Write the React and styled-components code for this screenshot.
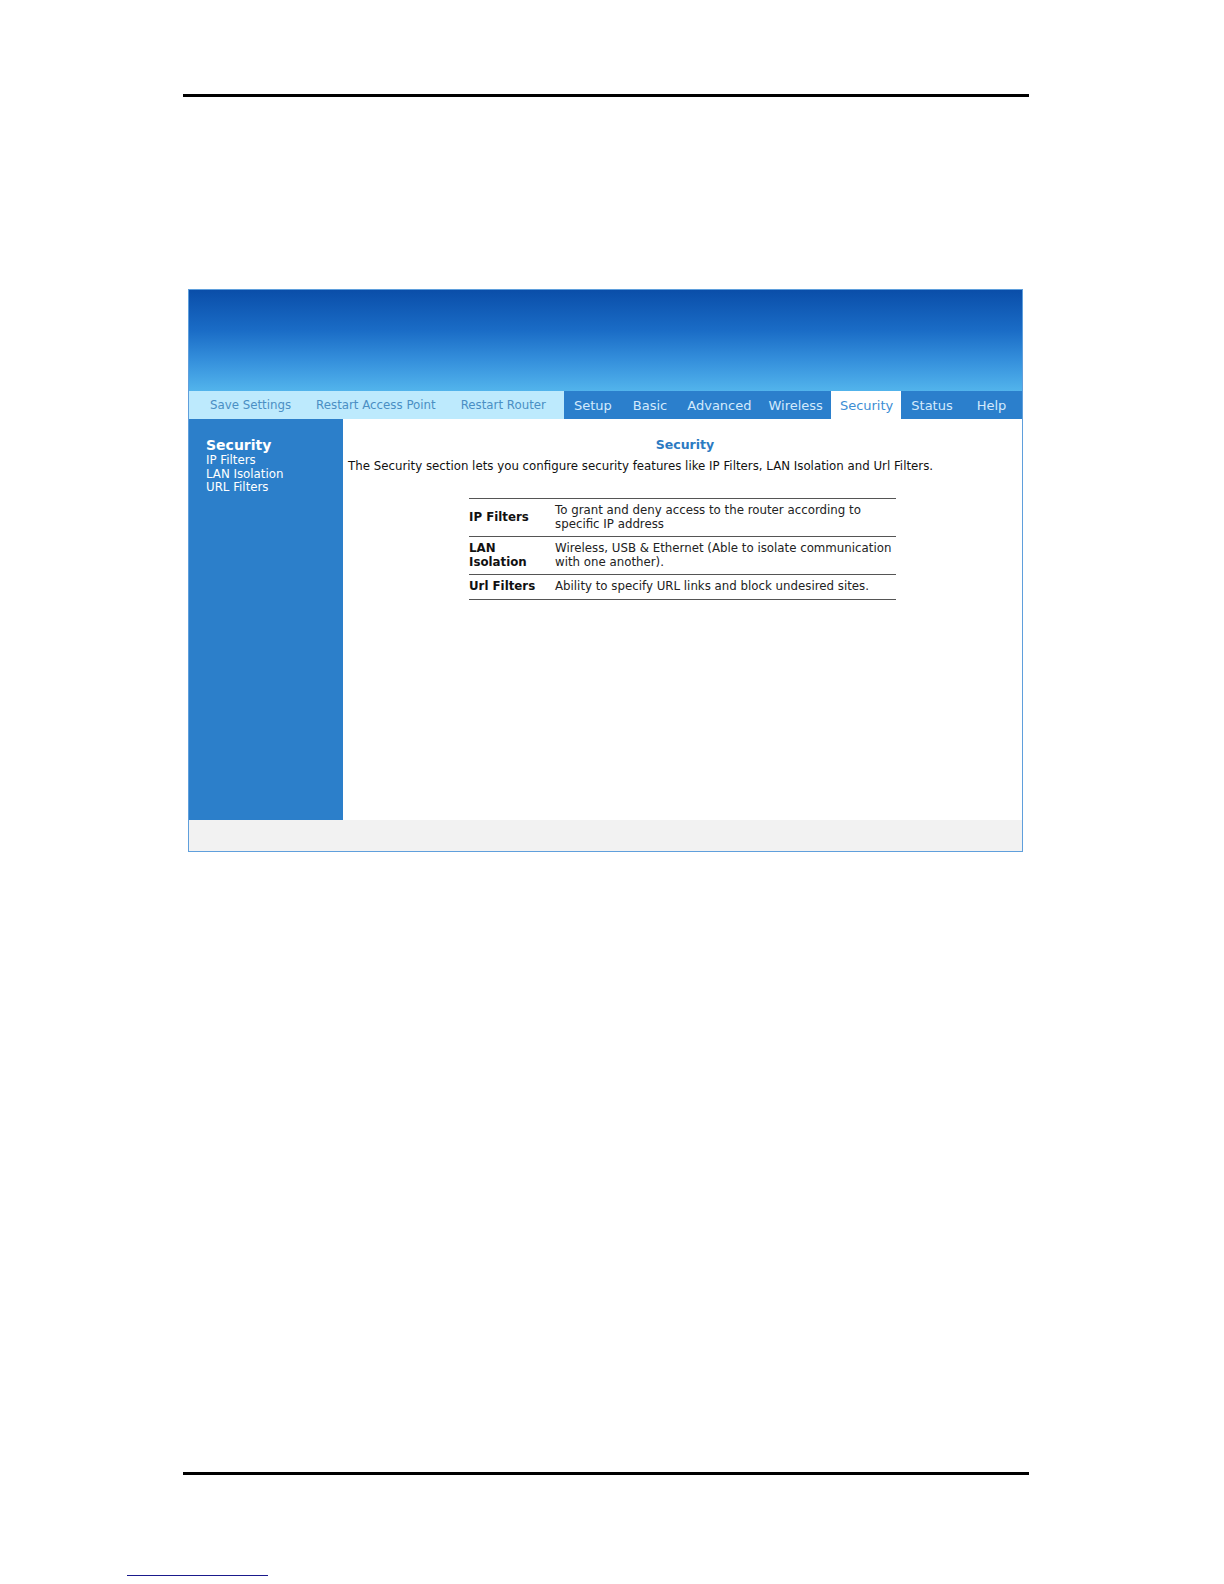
import React from 'react';
import styled, { createGlobalStyle } from 'styled-components';

const GlobalStyle = createGlobalStyle`
  html, body {
    margin: 0;
    height: 1584px;
    overflow: hidden;
  }
  body {
    background: #fff;
    font-family: 'DejaVu Sans', Verdana, sans-serif;
  }
`;

const Page = styled.div`
  height: 1584px;
  padding-top: 94px;
  box-sizing: border-box;
  overflow: hidden;
`;

const Rule = styled.div`
  margin-left: 183px;
  width: 846px;
  height: 3px;
  background: #000;
  margin-top: ${p => p.$top || 0}px;
`;

const Frame = styled.div`
  margin-top: 192px;
  margin-left: 188px;
  width: 835px;
  border: 1px solid #5f9fdc;
  box-sizing: border-box;
`;

const Banner = styled.div`
  height: 101px;
  background: linear-gradient(to bottom, #0a4ea9 0%, #1a6cc6 40%, #3590dc 70%, #52b4ec 100%);
`;

const NavBar = styled.nav`
  display: flex;
  height: 28px;
  background: #2b7fcc;
`;

const ToolGroup = styled.div`
  display: flex;
  align-items: center;
  width: 375px;
  flex: none;
  padding-left: 21px;
  gap: 25px;
  background: #bdeafd;
  box-sizing: border-box;
`;

const ToolLink = styled.span`
  font-size: 11.8px;
  color: #4a8fc4;
  white-space: nowrap;
`;

const TabGroup = styled.div`
  display: flex;
  align-items: stretch;
  flex: 1;
`;

const Tab = styled.span`
  display: flex;
  align-items: center;
  padding: 0 ${p => p.$right ?? p.$pad}px 0 ${p => p.$pad}px;
  font-size: 13px;
  white-space: nowrap;
  color: ${p => (p.$active ? '#3d8ed4' : '#d3eafc')};
  background: ${p => (p.$active ? '#fff' : 'transparent')};
`;

const Body = styled.div`
  display: flex;
  height: 401px;
`;

const Sidebar = styled.aside`
  width: 154px;
  flex: none;
  background: #2c7fca;
  padding: 18px 0 0 17px;
  box-sizing: border-box;
`;

const SideTitle = styled.div`
  color: #fff;
  font-size: 14px;
  font-weight: bold;
  line-height: 17px;
`;

const SideLink = styled.div`
  color: #fff;
  font-size: 11.8px;
  line-height: 13.5px;
`;

const Content = styled.main`
  flex: 1;
  padding: 18px 0 0 5px;
  background: #fff;
`;

const Heading = styled.div`
  text-align: center;
  color: #2b7ac2;
  font-size: 12.5px;
  font-weight: bold;
  line-height: 16px;
`;

const Intro = styled.p`
  margin: 6px 0 0;
  font-size: 11.8px;
  line-height: 14px;
  color: #111;
  white-space: nowrap;
`;

const Table = styled.table`
  margin: 25px 0 0 121px;
  width: 427px;
  table-layout: fixed;
  border-collapse: collapse;
  border-top: 1px solid #555;
`;

const Row = styled.tr`
  border-bottom: 1px solid #555;
`;

const Label = styled.th`
  width: 86px;
  text-align: left;
  vertical-align: middle;
  font-size: 11.8px;
  line-height: 13.5px;
  color: #111;
  padding: 5px 0;
`;

const Desc = styled.td`
  font-size: 11.8px;
  line-height: 13.5px;
  color: #222;
  padding: 5px 0;
  vertical-align: middle;
`;

const Footer = styled.div`
  height: 31px;
  background: #f2f2f2;
`;

const FootLink = styled.div`
  margin: 100px 0 0 127px;
  width: 141px;
  height: 1px;
  background: #1a1a8c;
`;

const tools = ['Save Settings', 'Restart Access Point', 'Restart Router'];
const tabs = [
  { label: 'Setup', pad: 10 },
  { label: 'Basic', pad: 11 },
  { label: 'Advanced', pad: 9 },
  { label: 'Wireless', pad: 8 },
  { label: 'Security', pad: 9, right: 8, active: true },
  { label: 'Status', pad: 10, right: 10 },
  { label: 'Help', pad: 14 },
];

const rows = [
  { name: 'IP Filters', text: 'To grant and deny access to the router according to specific IP address' },
  { name: 'LAN Isolation', text: 'Wireless, USB & Ethernet (Able to isolate communication with one another).' },
  { name: 'Url Filters', text: 'Ability to specify URL links and block undesired sites.' },
];

export default function App() {
  return (
    <Page>
      <GlobalStyle />
      <Rule />
      <Frame>
        <Banner />
        <NavBar>
          <ToolGroup>
            {tools.map(t => <ToolLink key={t}>{t}</ToolLink>)}
          </ToolGroup>
          <TabGroup>
            {tabs.map(t => (
              <Tab key={t.label} $pad={t.pad} $right={t.right} $active={t.active}>{t.label}</Tab>
            ))}
          </TabGroup>
        </NavBar>
        <Body>
          <Sidebar>
            <SideTitle>Security</SideTitle>
            <SideLink>IP Filters</SideLink>
            <SideLink>LAN Isolation</SideLink>
            <SideLink>URL Filters</SideLink>
          </Sidebar>
          <Content>
            <Heading>Security</Heading>
            <Intro>The Security section lets you configure security features like IP Filters, LAN Isolation and Url Filters.</Intro>
            <Table>
              <tbody>
                {rows.map(r => (
                  <Row key={r.name}>
                    <Label>{r.name}</Label>
                    <Desc>{r.text}</Desc>
                  </Row>
                ))}
              </tbody>
            </Table>
          </Content>
        </Body>
        <Footer />
      </Frame>
      <Rule $top={620} />
      <FootLink />
    </Page>
  );
}
